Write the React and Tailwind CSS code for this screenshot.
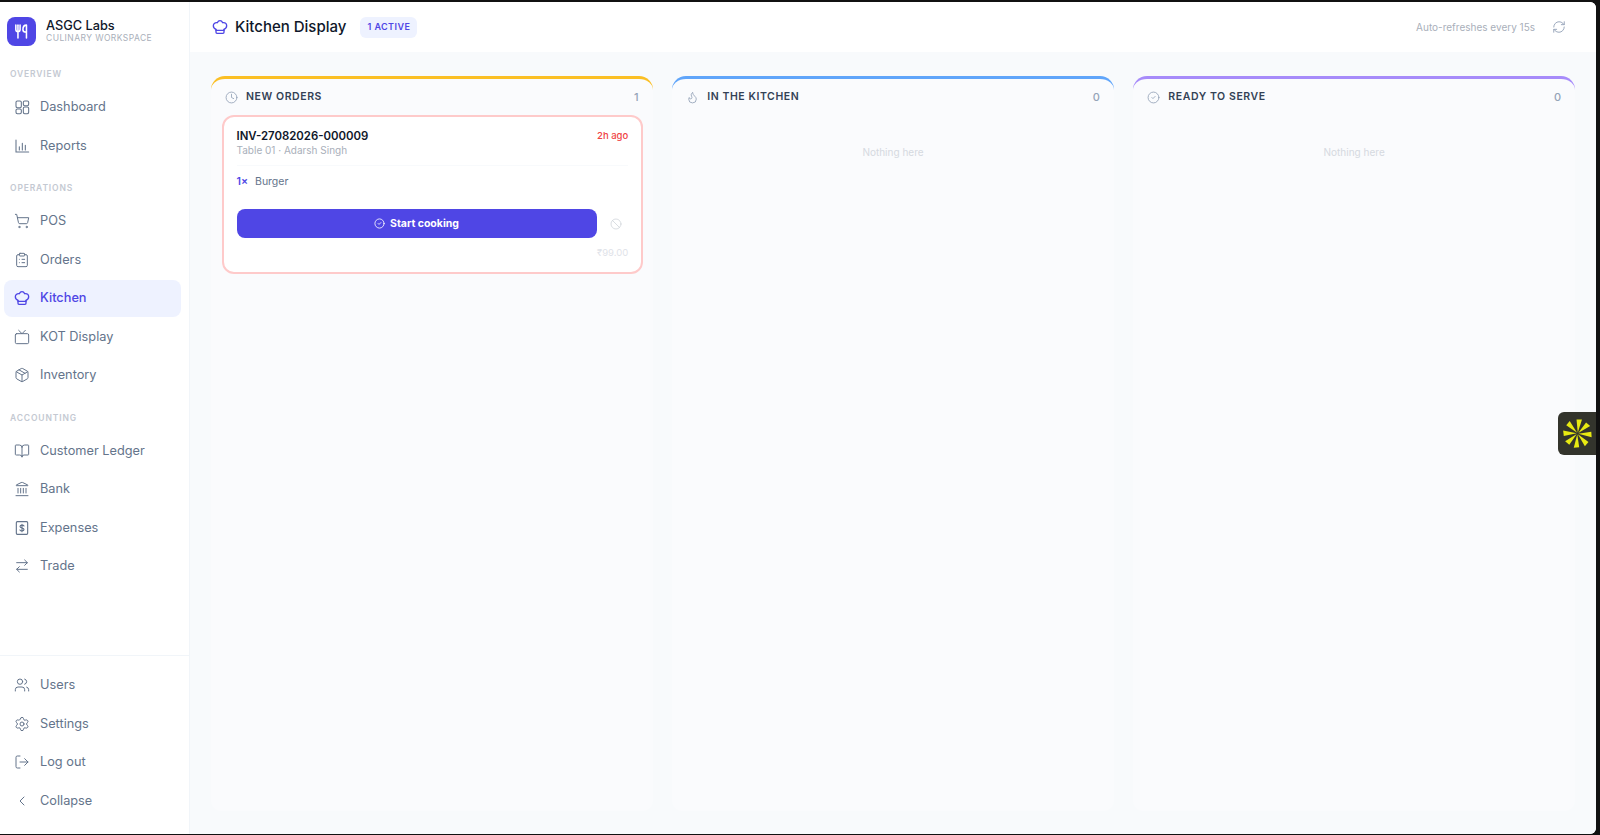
import React from "react";
import {
  ShoppingCart,
  ClipboardList,
  Tv,
  Package,
  BookOpen,
  Landmark,
  ArrowRightLeft,
  Users,
  Settings,
  LogOut,
  ChevronLeft,
  Clock,
  Flame,
  CircleCheck,
  RefreshCw,
  Ban,
} from "lucide-react";

const font = { fontFamily: "Inter, 'Noto Sans', sans-serif" };

const DashboardIcon = ({ className }) => (
  <svg viewBox="0 0 24 24" fill="none" stroke="currentColor" strokeWidth="1.6" className={className}>
    <rect x="3" y="3" width="8" height="10" rx="2" />
    <rect x="14" y="3" width="8" height="7" rx="2" />
    <rect x="3" y="15" width="8" height="7" rx="2" />
    <rect x="14" y="12" width="8" height="10" rx="2" />
  </svg>
);

const ChartIcon = ({ className }) => (
  <svg viewBox="0 0 24 24" fill="none" stroke="currentColor" strokeWidth="1.6" strokeLinecap="round" className={className}>
    <path d="M3 3v18h19" />
    <path d="M8 18v-5M12.5 18V8M17 18v-7" />
  </svg>
);

const ExpenseIcon = ({ className }) => (
  <svg viewBox="0 0 24 24" fill="none" stroke="currentColor" strokeWidth="1.7" strokeLinecap="round" strokeLinejoin="round" className={className}>
    <rect x="3.5" y="2.5" width="17" height="19" rx="1.5" />
    <path d="M12 6.5v11M15 9c-.5-1-1.5-1.3-3-1.3-1.7 0-3 .8-3 2.1 0 3 6 1.5 6 4.4 0 1.3-1.3 2.1-3 2.1-1.500 0-2.600-.4-3.100-1.400" />
  </svg>
);

const HatIcon = ({ className }) => (
  <svg viewBox="0 0 24 24" fill="none" stroke="currentColor" strokeWidth="2" strokeLinejoin="round" strokeLinecap="round" className={className}>
    <path d="M6 15.5C3.4 14.6 2 12.6 2 10.2 2 7.4 4.2 5.5 7 5.5c.3 0 .6 0 .9.1C8.8 3.7 10.2 2.5 12 2.5s3.2 1.2 4.1 3.1c.3-.1.6-.1.9-.1 2.8 0 5 1.9 5 4.7 0 2.4-1.400 4.400-4 5.300" />
    <path d="M6 15.5V20c0 .9.6 1.5 1.5 1.5h9c.9 0 1.500-.6 1.500-1.500v-4.500" />
    <path d="M6 17h12" />
  </svg>
);

const ForkIcon = () => (
  <svg viewBox="0 0 24 24" fill="none" stroke="white" strokeWidth="2.2" strokeLinecap="round" strokeLinejoin="round" className="w-[17px] h-[17px]">
    <path d="M4 3v6c0 2 1.3 3 3 3s3-1 3-3V3" />
    <path d="M7 3v18" />
    <path d="M19 21V3c-3 0-5 2.5-5 6.5 0 2.5 1.5 3.5 5 3.5" />
  </svg>
);

const Spark = () => (
  <svg viewBox="0 0 40 40" className="w-[33px] h-[33px]">
    {[8, 50, 95, 140, 185, 228, 272, 318].map((r) => (
      <polygon key={r} points="16.5,3.5 23,2.5 20.2,19" fill="#e8ea12" transform={`rotate(${r} 20 20)`} />
    ))}
  </svg>
);

const NavItem = ({ icon: Icon, label, active }) => (
  <a
    className={`flex items-center h-[37px] rounded-lg ml-[4px] mr-[8px] text-[12.75px] ${
      active ? "bg-[#eef2ff] text-[#4f46e5] font-medium" : "text-[#64748b]"
    }`}
  >
    <span className="w-[36px] flex justify-center shrink-0">
      <Icon className="w-[16px] h-[16px]" strokeWidth={1.5} />
    </span>
    <span>{label}</span>
  </a>
);

const GroupLabel = ({ children }) => (
  <p className="mt-[17px] mb-[7.5px] h-[14px] leading-[14px] pl-[10px] text-[8.5px] font-semibold tracking-[0.1em] text-[#c4c9d2]">
    {children}
  </p>
);

const Column = ({ color, icon: Icon, title, count, children }) => (
  <section className={`rounded-t-[14px] rounded-b-[10px] border-t-[3px] bg-[#fafbfd] ${color}`}>
    <div className="flex items-center justify-between h-[36px] pl-[14px] pr-[14px]">
      <div className="flex items-center gap-[8px]">
        <Icon className="w-[13px] h-[13px] text-[#94a3b8]" strokeWidth={1.6} />
        <span className="text-[10.5px] font-semibold tracking-[0.055em] text-[#334155]">{title}</span>
      </div>
      <span className="text-[11px] font-medium text-[#94a3b8]">{count}</span>
    </div>
    {children || (
      <p className="mt-[30px] text-center text-[10px] text-[#d5d9e0]">Nothing here</p>
    )}
  </section>
);

export default function App() {
  return (
    <div style={font} className="relative w-[1600px] h-[835px] bg-[#111] pt-[2px] pr-[4px] pb-[1px] overflow-hidden">
      <div className="flex h-full bg-white rounded-tr-md rounded-br-md overflow-hidden">
        <aside className="w-[190px] shrink-0 flex flex-col border-r border-[#f1f5f9] bg-white">
          <div className="flex items-center gap-[10px] pl-[7px] pt-[15px] pb-[4px]">
            <div className="w-[29px] h-[29px] rounded-lg bg-[#4f46e5] flex items-center justify-center">
              <ForkIcon />
            </div>
            <div className="-mt-[1px]">
              <p className="text-[12.75px] leading-[15px] font-medium text-[#0f172a]">ASGC Labs</p>
              <p className="text-[8.5px] leading-[11px] tracking-[0.05em] text-[#a9afba]">CULINARY WORKSPACE</p>
            </div>
          </div>

          <GroupLabel>OVERVIEW</GroupLabel>
          <nav className="flex flex-col gap-[1.5px]">
            <NavItem icon={DashboardIcon} label="Dashboard" />
            <NavItem icon={ChartIcon} label="Reports" />
          </nav>

          <GroupLabel>OPERATIONS</GroupLabel>
          <nav className="flex flex-col gap-[1.5px]">
            <NavItem icon={ShoppingCart} label="POS" />
            <NavItem icon={ClipboardList} label="Orders" />
            <NavItem icon={HatIcon} label="Kitchen" active />
            <NavItem icon={Tv} label="KOT Display" />
            <NavItem icon={Package} label="Inventory" />
          </nav>

          <GroupLabel>ACCOUNTING</GroupLabel>
          <nav className="flex flex-col gap-[1.5px]">
            <NavItem icon={BookOpen} label="Customer Ledger" />
            <NavItem icon={Landmark} label="Bank" />
            <NavItem icon={ExpenseIcon} label="Expenses" />
            <NavItem icon={ArrowRightLeft} label="Trade" />
          </nav>

          <div className="mt-auto border-t border-[#f1f5f9] pt-[11px] pb-[15px] flex flex-col gap-[1.5px]">
            <NavItem icon={Users} label="Users" />
            <NavItem icon={Settings} label="Settings" />
            <NavItem icon={LogOut} label="Log out" />
            <NavItem icon={ChevronLeft} label="Collapse" />
          </div>
        </aside>

        <main className="flex-1 flex flex-col min-w-0">
          <header className="h-[50px] shrink-0 bg-white flex items-center justify-between pl-[22px] pr-[30px]">
            <div className="flex items-center">
              <HatIcon className="w-[16px] h-[16px] text-[#4f46e5]" />
              <h1 className="ml-[7px] text-[15px] font-medium text-[#0f172a]">Kitchen Display</h1>
              <span className="ml-[14px] h-[21px] px-[7px] rounded-md bg-[#eef2ff] text-[#4f46e5] text-[9px] font-semibold tracking-[0.05em] flex items-center">
                1 ACTIVE
              </span>
            </div>
            <div className="flex items-center gap-[17px]">
              <span className="text-[10px] text-[#a9afba]">Auto-refreshes every 15s</span>
              <RefreshCw className="w-[14px] h-[14px] text-[#94a3b8]" strokeWidth={1.6} />
            </div>
          </header>

          <div className="flex-1 bg-[#f8fafc] grid grid-cols-3 gap-[19.5px] pl-[21px] pr-[21px] pt-[24px] pb-[23px]">
            <Column color="border-[#fbbf24]" icon={Clock} title="NEW ORDERS" count="1">
              <div className="ml-[11px] mr-[10px] h-[159px] rounded-xl border-2 border-[#fecaca] bg-white px-[12.5px] pt-[11.5px]">
                <div className="flex items-center justify-between leading-[14px]">
                  <span className="text-[11.4px] font-semibold text-[#0f172a]">INV-27082026-000009</span>
                  <span className="text-[9.5px] font-medium text-[#ef4444]">2h ago</span>
                </div>
                <p className="text-[10px] text-[#a9afba]">Table 01 · Adarsh Singh</p>
                <div className="mt-[7px] border-t border-[#f8fafc]" />
                <div className="mt-[8px] flex items-center gap-[7px] text-[10.5px]">
                  <span className="font-semibold text-[#4f46e5]">1×</span>
                  <span className="text-[#64748b]">Burger</span>
                </div>
                <div className="mt-[20px] flex items-center">
                  <button className="h-[29px] w-[360px] rounded-lg bg-[#4f46e5] text-white text-[10.5px] font-bold flex items-center justify-center gap-[5px]">
                    <CircleCheck className="w-[11px] h-[11px]" strokeWidth={1.8} />
                    Start cooking
                  </button>
                  <Ban className="ml-[13px] w-[12px] h-[12px] text-[#d1d5db]" strokeWidth={1.6} />
                </div>
                <p className="mt-[8px] text-right text-[9.5px] text-[#dfe3e9]">₹99.00</p>
              </div>
            </Column>
            <Column color="border-[#60a5fa]" icon={Flame} title="IN THE KITCHEN" count="0" />
            <Column color="border-[#a78bfa]" icon={CircleCheck} title="READY TO SERVE" count="0" />
          </div>
        </main>
      </div>

      <div className="absolute left-[1558px] top-[412px] w-[38px] h-[43px] rounded-l-md bg-[#33342c] flex items-center justify-center">
        <Spark />
      </div>
    </div>
  );
}
